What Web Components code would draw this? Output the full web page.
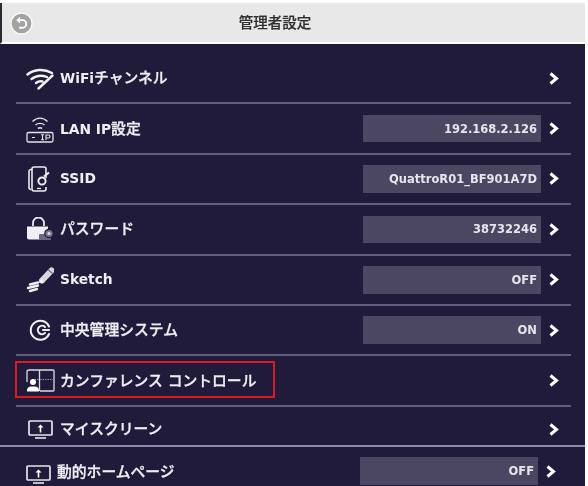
<!DOCTYPE html>
<html lang="ja">
<head>
<meta charset="utf-8">
<title>管理者設定</title>
<style>
html,body{margin:0;padding:0;height:486px;overflow:hidden;background:#fff}
body{font-family:"DejaVu Sans","Noto Sans CJK JP",sans-serif}
</style>
</head>
<body>
<admin-screen>
  <admin-header slot="header">管理者設定</admin-header>
  <settings-panel>
    <setting-row icon="wifi" label="WiFiチャンネル"></setting-row>
    <setting-row icon="lan" label="LAN IP設定" value="192.168.2.126"></setting-row>
    <setting-row icon="ssid" label="SSID" value="QuattroR01_BF901A7D" latin></setting-row>
    <setting-row icon="lock" label="パスワード" value="38732246"></setting-row>
    <setting-row icon="sketch" label="Sketch" value="OFF" latin></setting-row>
    <setting-row icon="central" label="中央管理システム" value="ON"></setting-row>
    <setting-row icon="conf" label="カンファレンス コントロール" highlight></setting-row>
    <setting-row icon="screen" label="マイスクリーン" last></setting-row>
  </settings-panel>
  <settings-panel tail>
    <setting-row icon="screen" label="動的ホームページ" value="OFF" tail></setting-row>
  </settings-panel>
</admin-screen>
<script>
const ICONS = {
  wifi:`<svg width="28" height="24" viewBox="0 0 28 24" fill="none" stroke="#f2f2f2" stroke-width="2.4" stroke-linecap="round"><path d="M1.5 8.5C8 3 18 2.5 26 7"/><path d="M5.5 13C10 9.5 16 9 21 11"/><path d="M10 17C12 15.5 14.5 15 16.5 15.5"/><path d="M26.5 9.5 L12.5 22.5"/></svg>`,
  lan:`<svg width="28" height="28" viewBox="0 0 28 28" fill="none" stroke="#e4e4e8" stroke-width="1.3"><path d="M6.5 6.5C11 2 17 2 21.5 6.5"/><path d="M9.5 10C12 7.8 16 7.8 18.5 10"/><path d="M12 13.5C13.2 12.6 14.8 12.6 16 13.5" stroke-width="1.6"/><rect x="1" y="17.5" width="26" height="9.5" rx="1.5"/><path d="M6 22.5h3M15 19.8h3M16.5 19.8v5M15 24.8h3M20 25V20h2.5a1.4 1.4 0 0 1 0 3H20" stroke-width="1.1"/></svg>`,
  ssid:`<svg width="24" height="26" viewBox="0 0 24 26" fill="none" stroke="#ececf0" stroke-width="1.6"><path d="M4 3.5H3a2 2 0 0 0-2 2v16a2 2 0 0 0 2 2"/><path d="M18 12V3a2 2 0 0 0-2-2H6a2 2 0 0 0-2 2v20a2 2 0 0 0 2 2h10a2 2 0 0 0 2-2v-2"/><path d="M9 22.5h4" stroke-width="1.3"/><circle cx="14" cy="15" r="3.6" stroke-width="2"/><path d="M16 10.5l5-4" stroke-width="2.2"/></svg>`,
  lock:`<svg width="28" height="25" viewBox="0 0 28 25"><path d="M7 9V6a5.500 5.500 0 0 1 11 0v3" fill="none" stroke="#e8e8ec" stroke-width="1.8"/><path d="M1 9.500h21v11a2 2 0 0 1-2 2H3a2 2 0 0 1-2-2z" fill="#f0f0f2"/><rect x="13" y="17" width="12" height="6" rx="1" fill="#6d6a80"/><circle cx="23" cy="16.500" r="4.200" fill="#77748a" stroke="#211b3b" stroke-width="1.200"/><circle cx="23" cy="16.500" r="1.600" fill="#d6d6dc"/></svg>`,
  sketch:`<svg width="28" height="27" viewBox="0 0 28 27" fill="none"><path d="M16 14.500 25.500 4.500" stroke="#d8d8de" stroke-width="6" stroke-linecap="round"/><path d="M22 3.500l4.500 4" stroke="#6d6a86" stroke-width="1.200"/><path d="M13 17l2-4 3.500 3.500z" fill="#f2f2f2"/><path d="M12 16.500 4 18.500M12 19.500 2 22M11 23 4 25" stroke="#eeeef0" stroke-width="2.400" stroke-linecap="round"/></svg>`,
  central:`<svg width="22" height="22" viewBox="0 0 22 22" fill="none" stroke="#f0f0f2" stroke-width="2" stroke-linecap="round"><path d="M20 7.500A9.500 9.500 0 1 0 20 15"/><path d="M20 11h-6"/><path d="M16 8a4.200 4.200 0 1 0 0 6"/></svg>`,
  conf:`<svg width="29" height="23" viewBox="0 0 29 23" fill="none"><path d="M1 13V3a2 2 0 0 1 2-2h24a1 1 0 0 1 1 1v19a1 1 0 0 1-1 1H14" stroke="#dcdce2" stroke-width="1.300"/><path d="M13.500 1v21" stroke="#dcdce2" stroke-width="1.300"/><path d="M14 10.500h14M6 10.500h7" stroke="#8f8cb8" stroke-width="1" stroke-dasharray="1.500 1"/><circle cx="7" cy="13" r="3" fill="#fff"/><path d="M1 22.500v-1.500a4 4 0 0 1 4-3.500h4a4 4 0 0 1 4 3.500v1.500z" fill="#fff"/></svg>`,
  screen:`<svg width="25" height="19" viewBox="0 0 25 19" fill="none" stroke="#e6e6ea"><rect x="1" y="1" width="23" height="14" rx="1" stroke-width="1.700"/><path d="M7 18h11" stroke-width="1.600"/><path d="M12.500 12.500V6" stroke="#fff" stroke-width="1.600"/><path d="M9.500 7.500 12.500 4.500 15.500 7.500z" fill="#fff" stroke="none"/></svg>`
};

class AdminScreen extends HTMLElement{
  constructor(){super();
    this.attachShadow({mode:'open'}).innerHTML=`<style>
      :host{display:block;width:585px;height:486px;padding-top:3px;box-sizing:border-box;filter:blur(.4px);overflow:hidden}
    </style><slot name="header"></slot><slot></slot>`;
  }
}
class AdminHeader extends HTMLElement{
  constructor(){super();
    this.attachShadow({mode:'open'}).innerHTML=`<style>
      :host{display:flex;align-items:center;height:39px;background:#e8e8e8;border-left:2px solid #2a2a33;border-bottom:2px solid #fff;padding-right:68px;box-sizing:content-box;color:#2e2e2e;font:500 14.500px "Noto Sans CJK JP",sans-serif;-webkit-text-stroke:.2px #2e2e2e}
      svg{margin-left:8px;flex:none;position:relative;top:.5px}
      span{flex:1;text-align:center;padding-bottom:2px}
    </style>
    <svg width="23" height="23" viewBox="0 0 24 24" fill="none"><circle cx="12" cy="12" r="11" fill="#a3a3a3" stroke="#f8f8f8" stroke-width="1.500"/><path d="M9.500 8.500H13a4 4 0 0 1 0 8H9.500" stroke="#fff" stroke-width="2"/><path d="M10.500 5 6.500 8.500 10.500 12z" fill="#fff"/></svg>
    <span><slot></slot></span>`;
  }
}
class SettingsPanel extends HTMLElement{
  constructor(){super();
    this.attachShadow({mode:'open'}).innerHTML=`<style>
      :host{display:block;background:#211b3b;padding:10px 14px 0 16px;border-bottom:2px solid #8c88a8;height:390.500px}
      :host([tail]){padding:0 17px 0 13px;border-bottom:0;height:40px}
    </style><slot></slot>`;
  }
}
class SettingRow extends HTMLElement{
  connectedCallback(){
    if(this.shadowRoot)return;
    const value=this.getAttribute('value');
    const label=this.getAttribute('label').replace(/[^\x00-\x7f]+/g,m=>`<span class="cjk">${m}</span>`);
    const root=this.attachShadow({mode:'open'});
    root.innerHTML=`<style>
      :host{display:flex;align-items:center;position:relative;height:48.400px;border-bottom:2px solid #625e7e;color:#efeff2;padding-right:12px;font:700 13.800px "DejaVu Sans","Noto Sans CJK JP",sans-serif}
      :host([last]){border-bottom:0;height:42px;padding-top:3px;box-sizing:border-box}
      :host([tail]){border-bottom:0;height:39px;padding-top:10px;box-sizing:border-box;align-items:flex-start}
      :host([highlight])::after{content:"";position:absolute;left:-1px;top:5px;width:256px;height:33px;border:2.500px solid #dc1a20}
      .icon{width:44px;flex:none;display:flex;justify-content:center;padding-left:4px;box-sizing:border-box}
      :host([tail]) .icon{padding:8px 0 0 6px}
      svg{display:block}
      .label{flex:1;white-space:nowrap;padding-bottom:3px}
      :host([latin]) .label{padding-bottom:1px}
      .cjk{font:500 14.800px "Noto Sans CJK JP",sans-serif;-webkit-text-stroke:.3px #efeff2}
      :host([tail]) .label{padding:3px 0 0}
      .value{width:178px;height:27.500px;background:#4b4662;display:flex;align-items:center;justify-content:flex-end;padding-right:4px;box-sizing:border-box;font:700 11.500px "DejaVu Sans",sans-serif;color:#e6e6ea;margin-right:8px}
      .chev{flex:none;display:block;margin-left:auto}
      :host([tail]) .value{height:28px}
      :host([tail]) .chev{margin-top:8px}
    </style>
    <span class="icon">${ICONS[this.getAttribute('icon')]||''}</span>
    <span class="label">${label}</span>
    ${value?`<span class="value">${value}</span>`:''}
    <svg class="chev" width="10" height="13" viewBox="0 0 10 13" fill="none"><path d="M1.500 1.500 7.500 6.500 1.500 11.500" stroke="#fff" stroke-width="3"/></svg>`;
  }
}
customElements.define('admin-screen',AdminScreen);
customElements.define('admin-header',AdminHeader);
customElements.define('settings-panel',SettingsPanel);
customElements.define('setting-row',SettingRow);
</script>
</body>
</html>
